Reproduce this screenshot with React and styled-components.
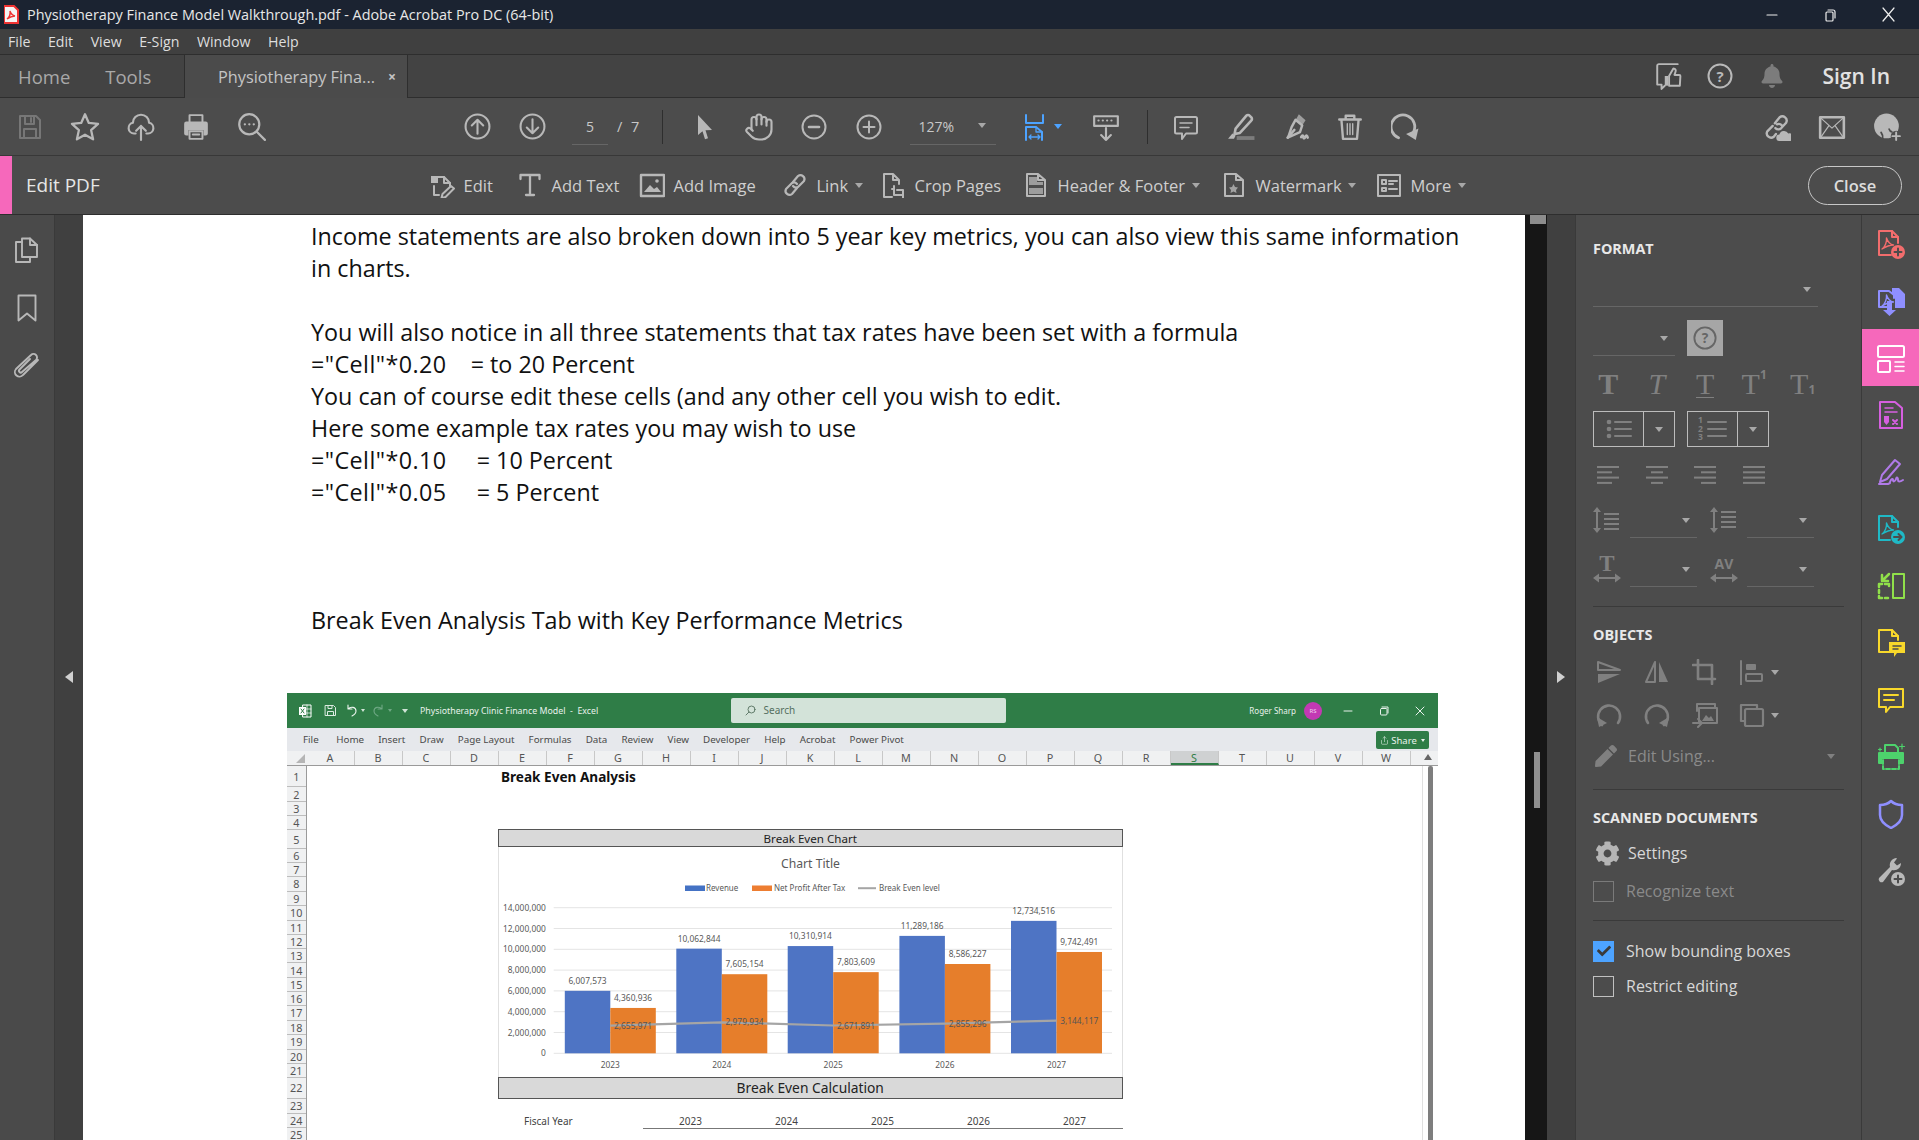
import React from 'react';
import styled, { createGlobalStyle } from 'styled-components';
import { Hand, Share } from 'lucide-react';
import { FaCog, FaPen, FaBell, FaCheck } from 'react-icons/fa';

const Global = createGlobalStyle`
  html, body { margin: 0; padding: 0; background: #4b4b4b; }
  #root { width: 1919px; height: 1140px; overflow: hidden; }
  * { box-sizing: border-box; }
`;
const UI = `"Open Sans", "Noto Sans", sans-serif`;

const Shell = styled.div`
  width: 1919px; height: 1140px; display: flex; flex-direction: column;
  font-family: ${UI}; color: #d8d8d8; overflow: hidden;
`;
const Glyph = styled.svg`
  display: block; flex: none; width: ${p => p.$s}px; height: ${p => p.$h || p.$s}px;
  color: ${p => p.$c || '#b8b8b8'}; fill: none; stroke: currentColor;
  stroke-width: ${p => p.$sw}; stroke-linecap: round; stroke-linejoin: round;
`;
const Ic = ({ s = 26, c, sw = 2, vb = 26, children }) => (
  <Glyph $s={s} $c={c} $sw={sw} viewBox={`0 0 ${vb} ${vb}`}>{children}</Glyph>
);
const F = p => <path fill="currentColor" stroke="none" {...p} />;

/* title bar */
const TitleBar = styled.div`
  height: 29px; background: #1b2331; display: flex; align-items: center; color: #e8e8e8;
  font-size: 14.4px; padding-left: 4px;
`;
const TitleText = styled.span`margin-left: 8px; white-space: nowrap;`;
const WinControls = styled.div`margin-left: auto; display: flex; padding-right: 2px;`;
const WinBtn = styled.div`width: 58px; display: flex; justify-content: center; align-items: center;`;

/* menu */
const MenuBar = styled.div`
  height: 26px; background: #404040; display: flex; align-items: center; gap: 17.5px;
  padding-left: 8px; font-size: 14.2px; color: #dedede; border-bottom: 1px solid #2e2e2e;
`;

/* tabs */
const TabBar = styled.div`
  height: 43px; background: #434343; display: flex; align-items: stretch;
  border-bottom: 1px solid #2e2e2e;
`;
const NavTabs = styled.div`width: 184px; display: flex; align-items: center; gap: 35px; padding-left: 18px;`;
const NavTab = styled.span`font-size: 18.5px; color: #a9a9a9;`;
const DocTab = styled.div`
  width: 224px; background: #4b4b4b; border-left: 1px solid #2e2e2e; border-right: 1px solid #2e2e2e;
  margin-bottom: -1px; display: flex; align-items: center; padding-left: 33px;
  font-size: 16.3px; color: #c4c4c4; white-space: nowrap;
`;
const TabClose = styled.span`margin-left: auto; margin-right: 11px; font-size: 14px; font-weight: 700; color: #c4c4c4;`;
const TabRight = styled.div`margin-left: auto; display: flex; align-items: center; padding-right: 29px;`;
const TabSlot = styled.div`width: 52px; display: flex; justify-content: center;`;
const SignIn = styled.span`margin-left: 24px; font-size: 21px; font-weight: 600; color: #e2e2e2;`;

/* toolbar */
const Toolbar = styled.div`
  height: 58px; background: #4c4c4c; display: flex; align-items: center;
  border-bottom: 1px solid #383838; padding-right: 4.5px; flex: none;
`;
const Slot = styled.div`
  width: ${p => p.$w || 55}px; margin-left: ${p => p.$ml || 0}px; flex: none;
  display: flex; justify-content: center; align-items: center;
`;
const Field = styled.div`
  width: ${p => p.$w}px; margin-left: ${p => p.$ml || 0}px; height: 36px; flex: none;
  padding-left: ${p => p.$pl || 0}px; border-bottom: 1px solid #666; display: flex; align-items: center;
  font-size: 14px; color: #c8c8c8; justify-content: ${p => p.$j || 'center'}; position: relative;
`;
const PlainLabel = styled.span`
  margin-left: ${p => p.$ml}px; width: ${p => p.$w}px; flex: none; font-size: 14.5px; color: #c8c8c8; word-spacing: 5px; white-space: nowrap;
`;
const ToolSep = styled.div`width: 1px; height: 34px; background: #2e2e2e; flex: none; margin-left: ${p => p.$ml}px;`;
const Caret = styled.span`
  display: inline-block; flex: none; width: 0; height: 0; border-left: ${p => p.$r || 4}px solid transparent;
  border-right: ${p => p.$r || 4}px solid transparent; border-top: ${p => (p.$r || 4) + 1}px solid ${p => p.$c || '#a8a8a8'};
  margin-left: ${p => p.$ml || 0}px;
`;
const FieldCaret = styled(Caret)`position: absolute; right: 10px; top: 14px;`;
const ToolRight = styled.div`margin-left: auto; display: flex;`;

/* edit bar */
const EditBar = styled.div`
  height: 59px; background: #4c4c4c; display: flex; align-items: center; flex: none;
  border-bottom: 1px solid #2e2e2e;
`;
const Strip = styled.div`width: 12px; height: 100%; background: #f668bb; flex: none;`;
const EditTitle = styled.div`width: 417px; flex: none; padding-left: 14px; font-size: 19px; color: #e6e6e6; font-weight: 500;`;
const EditItem = styled.div`
  width: ${p => p.$w}px; flex: none; display: flex; align-items: center; gap: 8.5px;
  font-size: 16.5px; color: #cfcfcf; white-space: nowrap;
`;
const CloseBtn = styled.div`
  margin-left: auto; margin-right: 17px; width: 94px; height: 39px; border: 1.5px solid #c8c8c8;
  border-radius: 20px; display: flex; align-items: center; justify-content: center;
  font-size: 16.5px; font-weight: 600; color: #dcdcdc;
`;

/* main */
const Main = styled.div`flex: 1; display: flex; min-height: 0;`;
const LeftRail = styled.div`
  width: 55px; background: #4a4a4a; border-right: 1px solid #3a3a3a; flex: none;
  display: flex; flex-direction: column; align-items: center; padding-top: 21px; gap: 30px;
`;
const Gutter = styled.div`
  width: 28px; background: #404040; flex: none; display: flex; align-items: center; justify-content: center;
  padding-bottom: 1px;
`;
const Tri = styled.span`
  width: 0; height: 0; border-top: 6px solid transparent; border-bottom: 6px solid transparent;
  ${p => p.$dir === 'l' ? 'border-right: 8px solid #d0d0d0;' : 'border-left: 8px solid #d0d0d0;'}
`;
const Viewport = styled.div`width: 1442px; flex: none; background: #fff; overflow: hidden;`;
const PageText = styled.div`
  padding: 5px 0 0 228px; font-family: "Open Sans", sans-serif; font-size: 23.32px; line-height: 32px; color: #111;
`;
const Line = styled.div`white-space: pre; min-height: 32px;`;
const Formula = styled.span`letter-spacing: 0.42px;`;
const ScrollTrack = styled.div`width: 22px; flex: none; background: #161616; position: relative;`;
const ThumbTop = styled.div`position: absolute; left: 5px; right: 1px; top: 0; height: 9px; background: #8c8c8c;`;
const ThumbMid = styled.div`position: absolute; left: 9px; width: 6px; top: 537px; height: 56px; background: #8f8f8f;`;

/* Excel picture */
const Excel = styled.div`
  margin: 57px 0 0 204px; width: 1151px; font-family: "Noto Sans", sans-serif; color: #444;
`;
const XTitle = styled.div`
  height: 35px; background: #2f7d47; display: flex; align-items: center; color: #e9f2ec; font-size: 8.8px; position: relative;
`;
const XIcon = styled.div`width: ${p => p.$w}px; margin-left: ${p => p.$ml || 0}px; flex: none; display: flex; justify-content: center; align-items: center;`;
const XDoc = styled.span`margin-left: ${p => p.$ml}px; white-space: pre; flex: none; font-size: ${p => p.$fs || 8.8}px;`;
const XSearch = styled.div`
  position: absolute; left: 443.5px; top: 5px; width: 275.5px; height: 24.5px; background: #d3e3d9; border-radius: 2px;
  display: flex; align-items: center; gap: 8px; padding-left: 14px; color: #55705f; font-size: 10px;
`;
const XAvatar = styled.div`
  width: 18px; height: 18px; border-radius: 50%; background: #c239b3; margin-left: 8px; flex: none;
  font-size: 6px; color: #f0d0ee; display: flex; align-items: center; justify-content: center;
`;
const XRight = styled.div`margin-left: auto; display: flex; align-items: center;`;
const XRibbon = styled.div`
  height: 23px; background: #e6e8ec; display: flex; align-items: center; font-size: 9.8px; color: #4a4a4a;
  padding-left: 16px; gap: 14.1px; position: relative; white-space: nowrap;
`;
const XTab = styled.span`margin-right: ${p => p.$mr || 0}px;`;
const XShare = styled.div`
  position: absolute; right: 9px; top: 3px; width: 53px; height: 18px; background: #2f7d47; border-radius: 2px; color: #e9f2ec;
  display: flex; align-items: center; justify-content: center; gap: 2px; font-size: 9.5px;
`;
const XCols = styled.div`display: flex; height: 15px; background: #f0f1f2; border-bottom: 1px solid #9a9a9a;`;
const XCorner = styled.div`width: 19.5px; flex: none; display: flex; align-items: flex-end; justify-content: flex-end; padding: 0 2px 2px 0;`;
const XCol = styled.div`
  width: 48px; flex: none; text-align: center; font-size: 10.8px; line-height: 14px; color: #555;
  border-right: 1px solid #c8c8c8; ${p => p.$on && 'background: #cfd1d2; border-bottom: 2px solid #2f7d47; color: #2f7d47;'}
`;
const XColEnd = styled.div`flex: 1; display: flex; justify-content: flex-end; padding: 3px 6px 0 0;`;
const XBody = styled.div`display: flex; background: #fff;`;
const XRows = styled.div`width: 19.5px; flex: none; border-right: 1px solid #9a9a9a; background: #f0f1f2;`;
const XRow = styled.div`
  height: ${p => p.$h}px; display: flex; align-items: center; justify-content: center; font-size: 10.8px;
  color: #555; border-bottom: 1px solid #bdbdbd;
`;
const XSheet = styled.div`width: 1115.5px; flex: none; padding-left: 191.5px;`;
const XHeading = styled.div`height: 63px; padding-left: 3px; font-size: 13.6px; font-weight: 700; color: #111; line-height: 21px;`;
const XBanner = styled.div`
  width: 624.5px; height: ${p => p.$h}px; background: #d9d9d9; border: 1px solid #555; color: #222; text-align: center;
  font-size: ${p => p.$fs}px; line-height: ${p => p.$h - 1}px;
`;
const XChartFrame = styled.div`width: 624.5px; height: 230px; border-left: 1px solid #e0e0e0; border-right: 1px solid #e0e0e0;`;
const XFiscal = styled.div`
  width: 624.5px; margin-top: 16px; display: grid; grid-template-columns: 144.5px repeat(5, 96px);
  font-size: 10px; color: #444; line-height: 12px;
`;
const XFiscalLabel = styled.div`padding-left: 26px;`;
const XYear = styled.div`text-align: center; border-bottom: 1px solid #777; padding-bottom: 1px;`;
const XVScroll = styled.div`flex: 1; border-left: 1px solid #e0e0e0; display: flex; justify-content: flex-end; padding-right: 5px;`;
const XVBar = styled.div`width: 5px; height: 500px; background: #7e7e7e; border-radius: 2px;`;

/* side panel */
const Panel = styled.div`
  width: 287px; flex: none; background: #4c4c4c; padding: 24px 0 0 17px; border-left: 1px solid #3a3a3a; border-right: 1px solid #3a3a3a;
`;
const Heading = styled.div`
  height: 20px; line-height: 20px; margin-top: ${p => p.$mt || 0}px; font-size: 14.4px; font-weight: 700; color: #e8e8e8;
`;
const Row = styled.div`
  display: flex; align-items: center; height: ${p => p.$h}px; margin-top: ${p => p.$mt || 0}px; margin-left: ${p => p.$ml || 0}px;
`;
const Select = styled.div`
  width: ${p => p.$w}px; height: ${p => p.$h || 28}px; flex: none; margin-top: ${p => p.$mt || 0}px; border-bottom: 1px solid #666; position: relative;
`;
const SelectCaret = styled(Caret)`position: absolute; right: 7px; top: ${p => p.$t || 14}px;`;
const HelpBox = styled.div`
  width: 36px; height: 36px; margin-left: 12px; background: #a6a6a6; display: flex; align-items: center; justify-content: center;
`;
const Cell = styled.div`
  width: ${p => p.$w}px; flex: none; display: flex; justify-content: center; align-items: center; padding-right: ${p => p.$pr || 0}px;
`;
const SerifT = styled.span`
  font-family: "Liberation Serif", serif; font-size: 30px; font-weight: ${p => p.$b ? 700 : 400}; font-style: ${p => p.$i ? 'italic' : 'normal'};
  color: #808080; line-height: 30px; position: relative;
  ${p => p.$u && 'border-bottom: 1.5px solid #808080; line-height: 27px;'}
`;
const SupSub = styled.span`
  position: absolute; left: 100%; top: ${p => p.$sub ? 15 : 0}px; font-family: ${UI}; font-size: 12px; font-weight: 700; line-height: 12px; color: #808080;
`;
const ListBox = styled.div`
  width: 82px; height: 36px; margin-right: 12px; flex: none; border: 1px solid #bcbcbc; display: flex; align-items: center;
`;
const ListMain = styled.div`width: 50px; height: 100%; border-right: 1px solid #bcbcbc; display: flex; align-items: center; justify-content: center; gap: 4px;`;
const ListSide = styled.div`flex: 1; display: flex; justify-content: center;`;
const Nums = styled.div`font-size: 8.5px; line-height: 8.5px; font-weight: 700; color: #808080; text-align: center;`;
const SpaceCell = styled.div`width: 37px; margin-left: ${p => p.$ml || 0}px; flex: none; display: flex; justify-content: flex-start;`;
const Stack = styled.div`display: flex; flex-direction: column; align-items: center; color: #808080;`;
const TT = styled.span`font-family: "Liberation Serif", serif; font-weight: 700; font-size: 23px; line-height: 17px; color: #808080;`;
const AV = styled.span`font-family: ${UI}; font-weight: 700; font-size: 14px; line-height: 17px; color: #808080;`;
const Sep = styled.div`width: 251px; height: 1px; background: #3a3a3a; margin-top: ${p => p.$mt}px;`;
const ObjCell = styled.div`
  width: 48px; flex: none; display: flex; align-items: center; gap: 6px;
  ${p => p.$menu ? 'padding-left: 10px;' : 'justify-content: center;'}
`;
const Muted = styled.span`font-size: 16px; color: ${p => p.$c || '#8a8a8a'}; margin-left: ${p => p.$ml || 0}px; white-space: nowrap;`;
const Check = styled.div`
  width: 21px; height: 21px; flex: none; border: 1.5px solid ${p => p.$dim ? '#7a7a7a' : '#c0c0c0'};
  ${p => p.$on && 'background: #4da3ff; border: 0; color: #3a3a3a;'} display: flex; align-items: center; justify-content: center;
`;
const GrowCaret = styled(Caret)`margin-left: auto; margin-right: 26px;`;
const Rail = styled.div`flex: 1; background: #4c4c4c; display: flex; flex-direction: column;`;
const RailSlot = styled.div`
  height: 57px; display: flex; align-items: center; justify-content: center; ${p => p.$on && 'background: #f668bb;'}
`;

/* icons */
const G = '#b9b9b9', D = '#808080', BLUE = '#4da3ff', DK = '#4c4c4c';
const Swoosh = () => <path d="M6 20c3-2 5-7 4.5-11 1.5 4.5 3.5 6.5 7 7-3.5 0-7.500 1.500-11.500 4z" strokeWidth="1.4" />;

const AcrobatFile = () => (
  <svg width="15" height="19" viewBox="0 0 15 19"><path d="M0 1h10l4 4v13H0z" fill="#f4f4f4" stroke="#e33" strokeWidth="2" /><path d="M3 14c2-1.500 3.500-5 3-8 1 3 2.500 4.500 5 5-2.500 0-5 1-8 3z" fill="none" stroke="#e33" strokeWidth="1.4" /></svg>
);
const WinMin = () => <Ic s={14} vb={14} c="#eee" sw={1.2}><path d="M2 7h10" /></Ic>;
const WinRestore = () => <Ic s={14} vb={14} c="#eee" sw={1.2}><rect x="3" y="4" width="7" height="9" rx="1" /><path d="M5 2h5a2 2 0 0 1 2 2v6" /></Ic>;
const WinClose = () => <Ic s={15} vb={15} c="#eee" sw={1.2}><path d="M2 1l11 13M13 1L2 14" /></Ic>;

const Star = () => <Ic s={30}><path d="M13 2l3.300 7.500 8 .8-6 5.400 1.700 8L13 19.700 6 23.700l1.700-8-6-5.400 8-.8z" /></Ic>;
const Save = () => <Ic c="#777"><path d="M3 2h16l4 4v18H3z" /><path d="M8 2v8h9V2M14 4v4M7 24v-9h12v9" /></Ic>;
const Upload = () => <Ic s={28}><path d="M8 19H6.500a5 5 0 0 1-1-9.900 7.500 7.500 0 0 1 15 0 5 5 0 0 1-1 9.900H18" /><path d="M13 25V12M8.500 16.500 13 12l4.500 4.500" /></Ic>;
const Print = () => <Ic s={28} sw={1.8}><path d="M7 9V2h12v7" /><F d="M4 8h18a2 2 0 0 1 2 2v9a2 2 0 0 1-2 2h-2v-5H6v5H4a2 2 0 0 1-2-2v-9a2 2 0 0 1 2-2z" /><path d="M7 17h12v7H7zM10 20h6" /></Ic>;
const Find = () => <Ic s={29}><circle cx="11" cy="11" r="9" /><path d="M17.500 17.500 25 25M7 11h.1M11 11h.1M15 11h.1" /></Ic>;
const CircleUp = () => <Ic s={27}><circle cx="13" cy="13" r="11.500" /><path d="M13 20V6.500M7.500 12 13 6.500l5.500 5.500" /></Ic>;
const CircleDown = () => <Ic s={27}><circle cx="13" cy="13" r="11.500" /><path d="M13 6v13.500M7.500 14l5.500 5.500L18.500 14" /></Ic>;
const Cursor = () => <Ic><F d="M7 1l14 15-6.500.3 2.500 8-3 1-2.500-8L7 21z" /></Ic>;
const Minus = () => <Ic><circle cx="13" cy="13" r="11.500" /><path d="M8 13h10" strokeWidth="2.600" /></Ic>;
const Plus = () => <Ic><circle cx="13" cy="13" r="11.500" /><path d="M7.500 13h11M13 7.500v11" /></Ic>;
const Fit = () => <Ic s={28} vb={28} c={BLUE} sw={2}><path d="M5 2v8h17V2" /><path d="M5 27V14h10l6 5v8" /><path d="M15 14v5h6M8 24h11M8 24l2-2M8 24l2 2M19 24l-2-2M19 24l-2 2" strokeWidth="1.300" /></Ic>;
const ReadMode = () => <Ic s={28}><path d="M2 3h22v9H2z" strokeWidth="2" /><path d="M6 7h.1M10 7h.1M14 7h.1M18 7h.1M13 14v11M8.500 20.500 13 25l4.500-4.500" /></Ic>;
const Note = () => <Ic><path d="M3.500 3h19a1.500 1.500 0 0 1 1.500 1.500V18a1.500 1.500 0 0 1-1.500 1.500H13L9 25v-5.500H3.500A1.500 1.500 0 0 1 2 18V4.500A1.500 1.500 0 0 1 3.500 3z" /><path d="M7 9h12M7 13.500h9" strokeWidth="1.500" /></Ic>;
const Marker = () => <Ic s={28} sw={2.400}><path d="M18 2.500a2 2 0 0 1 3 0l1.500 1.500a2 2 0 0 1 0 3L12 18.500 7 19.500l1-5z" /><F d="M1 24l4-5 3 2-1.500 3z" /><F d="M9 21.500h16.500V25H9z" opacity=".45" /></Ic>;
const Nib = () => <Ic s={29} sw={2.200}><path d="M13 7l6 5-2 6-11 5 .5-.5 3-9z" /><F d="M13.500 6.500 16 2l6 5.500-3 4.500z" opacity=".75" /><path d="M6 23l6-7M18 22.500c1-2 2-2 2 0s1.500 1 2-.5 1.500-1 2 1" /></Ic>;
const Bin = () => <Ic s={28} sw={2.200}><path d="M3 6h20M9 6V2.500h8V6M5 6l1.500 18h13L21 6" /><path d="M10.500 10v10M13 10v10M15.500 10v10" strokeWidth="1.300" /></Ic>;
const Rotate = () => <Ic s={28} sw={2.600}><path d="M7 23A11 11 0 1 1 21 17.500" /><F d="M25.500 14.500 23 25l-9-5.500z" /></Ic>;
const LinkCloud = () => <Ic s={28} sw={2.200}><path d="M11 9.500l4.500-5.500a4 4 0 0 1 6 5L17 14a4 4 0 0 1-5.500 0M13 10.500a4 4 0 0 1 4.500 1M9 12l-5 5a4 4 0 0 0 6 5l2-2.500" /><F d="M15.500 26a3 3 0 0 1-.3-6 4.500 4.500 0 0 1 8.300-1 3.500 3.500 0 0 1 1.500 7z" /></Ic>;
const Mail = () => <Ic s={28} sw={2}><path d="M2 4h22v19H2z" strokeWidth="2.400" /><path d="M3 5l10 9 10-9M3 22l7-10M23 22l-7-10" strokeWidth="1.100" /></Ic>;
const UserAdd = () => <Ic s={28}><circle cx="12.500" cy="12" r="11.500" fill="currentColor" stroke="none" /><path d="M9 24c.3-2 0-4-1.500-6M15 15c.5 1.500 1 2 2.500 2.500" stroke={DK} strokeWidth="1.600" /><circle cx="21.500" cy="21.500" r="5" fill={DK} stroke="none" /><path d="M21.500 18v7M18 21.500h7" strokeWidth="1.800" /></Ic>;
const Thumb = () => <Ic s={28} sw={1.800}><path d="M7 21H3V3.500A1.500 1.500 0 0 1 4.500 2H22M7 21v4l3-3" /><F d="M10 13h3v9h-3z" /><path d="M14 13l4-7c2 0 2.500 1.500 2 3l-1 3h4.500a1 1 0 0 1 1 1L24 22H14z" /></Ic>;
const Help = ({ c = G, s = 26 }) => <Ic s={s} c={c}><circle cx="13" cy="13" r="11.500" /><text x="13" y="18.500" textAnchor="middle" fontSize="15" fontWeight="700" fill="currentColor" stroke="none" fontFamily="Open Sans">?</text></Ic>;

const EdPage = () => <Ic><path d="M8 5h7l6 6v3" /><F d="M2 4h7v7H2z" /><path d="M15 5v6h6M5 14v9h5" /><path d="M22 14l3 2.500-8.500 8.500-4 1 1-4z" /></Ic>;
const TextT = () => <Ic sw={2.300}><path d="M3.500 7V3h19v4M13 3v20M9 23h8" /></Ic>;
const AddImg = () => <Ic sw={2.400}><rect x="2" y="3" width="23" height="21" /><F d="M5 20l6-7 4 4 3-2 4 5z" /><circle cx="18" cy="9" r="1.800" fill="currentColor" stroke="none" /></Ic>;
const LinkI = () => <Ic sw={2.200}><path d="M11 10l5-6a4 4 0 0 1 6 5l-6 6a4 4 0 0 1-5-1" /><path d="M15 16l-5 6a4 4 0 0 1-6-5l6-6a4 4 0 0 1 5 1" /></Ic>;
const Crop = () => <Ic><path d="M12 25H4V2h9l6 6v4M13 2v6h6" /><path d="M14 14v9h9M17 18h6v8M14 17h-2" /></Ic>;
const HdrFtr = () => <Ic><path d="M4 2h11l7 6v16H4zM15 2v6h7" /><F d="M6 5h8v5h6v3H6z" opacity=".75" /><F d="M6 16h14v6H6z" opacity=".75" /></Ic>;
const Wmark = () => <Ic><path d="M4 2h11l7 6v16H4zM15 2v6h7" /><F d="M12.500 12l1.500 3 3 .5-2 2.500.5 3-3-1.500-3 1.500.5-3-2-2.500 3-.5z" opacity=".8" /></Ic>;
const More = () => <Ic><rect x="2" y="3" width="22" height="21" /><path d="M6 8h4v4H6zM6 16h4v3H6zM13 9h8M13 12h4M13 17h8" /></Ic>;

const Pages = () => <Ic s={28} vb={28} sw={1.900}><path d="M9 6V2.500h8l7 6.500v12h-7" /><path d="M17 2.500V9h7M9 6H3v20h14v-5" /><path d="M9 6v15h8" /></Ic>;
const Bookmark = () => <Ic s={28} vb={28} sw={1.900}><path d="M5.500 1.500h17v25l-8.500-7-8.500 7z" /></Ic>;
const Clip = () => <Ic s={28} vb={28} sw={1.900}><path d="M25 8 10 23a4.500 4.500 0 0 1-7-6L18 3a3.500 3.500 0 0 1 5 5L9 20a1.700 1.700 0 0 1-2.500-2.500L17 7" /></Ic>;

const RIC = (c, ch) => <Ic s={30} vb={30} c={c} sw={2}>{ch}</Ic>;
const railIcons = [
  RIC('#f26d6d', <><path d="M15 26H3V2h13l6 6v6" /><path d="M16 2v6h6" /><Swoosh /><circle cx="22" cy="23" r="7" fill="currentColor" stroke="none" /><path d="M22 19.500v7M18.500 23h7" stroke={DK} /></>),
  RIC('#8f8fff', <><path d="M14 21H3V5h10l5 4v3" /><Swoosh /><F d="M16 2h7l6 6v14H19V10l-3-3z" /><F d="M11 15h5v9h4l-6.500 6L7 24h4z" /></>),
  RIC('#ffffff', <><rect x="2" y="3" width="26" height="11" rx="1.500" /><rect x="2" y="18" width="12" height="11" rx="1" /><path d="M19 19h9M19 23.500h9M19 28h9" strokeWidth="1.500" /></>),
  RIC('#d65fe0', <><path d="M4 2h15l7 6v20H4z" /><path d="M9 8h8M9 12h12" strokeWidth="1.500" /><F d="M8 16h5v6l-2.500 3L8 22z" /><path d="M17 20l4 4M21 20l-4 4" /></>),
  RIC('#b07ae8', <><path d="M4 25l2-7L19 3l5 4L11 22z" /><path d="M3 27h9l2-1M14 25c1-3 3-4 3-2s2 2 3-1 2-1 2 1 2 2 5 0" /></>),
  RIC('#1fb9c6', <><path d="M14 26H3V2h13l6 6v5" /><path d="M16 2v6h6" /><Swoosh /><circle cx="22" cy="23" r="7" fill="currentColor" stroke="none" /><path d="M18 23h7M22.500 20l3 3-3 3" stroke={DK} /></>),
  RIC('#90e04a', <><rect x="17" y="3" width="11" height="24" /><path d="M3 13h10M3 13v14M3 27h10M13 13v2" strokeDasharray="3 3" strokeWidth="2.500" /><path d="M13 3 7 9M6 4v6h6" strokeWidth="2.500" /></>),
  RIC('#f8d82b', <><path d="M14 24H3V2h13l6 6v4" /><path d="M16 2v6h6" /><F d="M13 14h16v11h-8l-3 4v-4h-5z" /><path d="M17 18h8M17 21h5" stroke={DK} strokeWidth="1.500" /></>),
  RIC('#f8d82b', <><path d="M3 4h24v18H14l-4 5v-5H3z" /><path d="M8 10h14M8 15h10" /></>),
  RIC('#4dd26c', <><path d="M9 11V3h10l3 3v5" /><F d="M3 10h24a1 1 0 0 1 1 1v10a1 1 0 0 1-1 1h-3v-5H6v5H3a1 1 0 0 1-1-1V11a1 1 0 0 1 1-1z" /><path d="M7 18v9h16v-9" strokeDasharray="4 2" /><path d="M26 2v5M23.500 4.500h5M4 6v3M2.500 7.500h3" strokeWidth="1.200" /></>),
  RIC('#8f8fff', <><path d="M15 2c3 3 7 4 11 4v10c0 6-5 10-11 13C9 26 4 22 4 16V6c4 0 8-1 11-4z" strokeWidth="2.500" /></>),
  RIC('#b9b9b9', <><path d="M3 22 14 11c-1-4 1-8 6-9l1 .5-3 4 3 3 4-2.500c0 5-4 8-9 7L7 26a3 3 0 0 1-4-4z" fill="currentColor" stroke="none" /><circle cx="22" cy="23" r="7" fill="currentColor" stroke="none" /><path d="M22 19.500v7M18.500 23h7" stroke={DK} /></>),
];

const AlignI = ({ kind }) => {
  const rows = {
    l: [[1, 23], [1, 16], [1, 23], [1, 16]],
    c: [[1, 23], [6, 18], [1, 23], [6, 18]],
    r: [[1, 23], [8, 23], [1, 23], [8, 23]],
    j: [[1, 23], [1, 23], [1, 23], [1, 23]],
  }[kind];
  return <Ic s={24} vb={24} c={D} sw={2}>{rows.map((r, i) => <path key={i} d={`M${r[0]} ${4 + i * 5.300}H${r[1]}`} strokeLinecap="butt" />)}</Ic>;
};
const LineSpacing = ({ many }) => (
  <Ic s={28} vb={28} c={D} sw={2}>
    <path d="M4 5v18" /><F d="M4 1l4 5H0zM4 27l4-5H0z" />
    {(many ? [6, 11, 16, 21] : [8, 13, 18, 23]).map(y => <path key={y} d={`M11 ${y}H26`} strokeLinecap="butt" />)}
  </Ic>
);
const HArrow = () => (
  <Glyph $s={28} $h={12} $c={D} $sw={2} viewBox="0 8 28 12"><path d="M4 14h20" /><F d="M0 14l6-4.500v9zM28 14l-6-4.500v9z" /></Glyph>
);
const Obj = {
  flipH: <Ic c={D} sw={2}><path d="M2 3l22 8H2z" /><F d="M2 15h22L2 24z" /></Ic>,
  flipV: <Ic c={D} sw={2}><path d="M11 3v20H2z" /><F d="M15 3l9 20h-9z" /></Ic>,
  crop: <Ic c={D} sw={2.600}><path d="M6 1v19h17M1 6h19v19" /></Ic>,
  align: <Ic c={D} sw={2}><path d="M2 2v24" /><rect x="7" y="5" width="10" height="6" rx="1" fill="currentColor" stroke="none" /><rect x="7" y="15" width="16" height="7" rx="1" /></Ic>,
  undo: <Ic c={D} sw={2.600}><path d="M6 23A11 11 0 1 1 22 21" /><F d="M1 15l2 10 8-4z" /></Ic>,
  redo: <Ic c={D} sw={2.600}><path d="M20 23A11 11 0 1 0 4 21" /><F d="M25 15l-2 10-8-4z" /></Ic>,
  replace: <Ic c={D} sw={2}><path d="M5 9V2h18v4" /><rect x="7" y="6" width="18" height="15" /><F d="M10 19l4-6 3 3 2-2 3 5z" /><path d="M1 21h9M6 17l4 4-4 4" /></Ic>,
  copy: <Ic c={D} sw={2.200}><path d="M5 19H2V3h16v3" /><rect x="6" y="7" width="18" height="17" rx="1.500" /></Ic>,
};
const ListBullets = () => <Ic s={28} vb={28} c={D} sw={2}>{[7, 14, 21].map(y => <React.Fragment key={y}><circle cx="4" cy={y} r="2.300" fill="currentColor" stroke="none" /><path d={`M10 ${y}H26`} /></React.Fragment>)}</Ic>;
const ListLines = () => <Ic s={20} vb={20} c={D} sw={2}><path d="M1 3h18M1 10h18M1 17h18" /></Ic>;

/* Excel chart */
const years = [
  { y: 2023, x: 65.8, r: 6.007573, n: 4.360936, rl: '6,007,573', nl: '4,360,936', bl: '2,655,971', b: 2.656 },
  { y: 2024, x: 177.3, r: 10.062844, n: 7.605154, rl: '10,062,844', nl: '7,605,154', bl: '2,979,934', b: 2.98 },
  { y: 2025, x: 288.7, r: 10.310914, n: 7.803609, rl: '10,310,914', nl: '7,803,609', bl: '2,671,891', b: 2.672 },
  { y: 2026, x: 400.4, r: 11.289186, n: 8.586227, rl: '11,289,186', nl: '8,586,227', bl: '2,855,296', b: 2.855 },
  { y: 2027, x: 512, r: 12.734516, n: 9.742491, rl: '12,734,516', nl: '9,742,491', bl: '3,144,117', b: 3.144 },
];
const base = 206.3, perM = 10.4, barW = 45.5;
const yOf = v => base - v * perM;
const ChartTxt = styled.text`font-family: "Noto Sans", sans-serif; font-size: ${p => p.$fs}px; fill: ${p => p.$c || '#595959'};`;
const Chart = () => (
  <svg width="623" height="230" viewBox="0 0 623 230">
    <ChartTxt x="311.500" y="21" $fs={12.200} textAnchor="middle">Chart Title</ChartTxt>
    <rect x="186" y="38.500" width="20" height="5.500" fill="#4472c4" />
    <ChartTxt x="207" y="44" $fs={8}>Revenue</ChartTxt>
    <rect x="253" y="38.500" width="20" height="5.500" fill="#ed7d31" />
    <ChartTxt x="275" y="44" $fs={8}>Net Profit After Tax</ChartTxt>
    <path d="M359 41.200h18" stroke="#a5a5a5" strokeWidth="2" />
    <ChartTxt x="380" y="44" $fs={8}>Break Even level</ChartTxt>
    {[14, 12, 10, 8, 6, 4, 2, 0].map(m => (
      <React.Fragment key={m}>
        <path d={`M54.700 ${yOf(m)}H613`} stroke="#e4e4e4" strokeWidth="1" />
        <ChartTxt x="46.800" y={yOf(m) + 3} $fs={8.400} textAnchor="end">{m === 0 ? '0' : `${m},000,000`}</ChartTxt>
      </React.Fragment>
    ))}
    {years.map(d => (
      <React.Fragment key={d.y}>
        <rect x={d.x} y={yOf(d.r)} width={barW} height={d.r * perM} fill="#4e74c4" />
        <rect x={d.x + barW} y={yOf(d.n)} width={barW} height={d.n * perM} fill="#e67e2b" />
        <ChartTxt x={d.x + barW / 2} y={yOf(d.r) - 7} $fs={8.400} textAnchor="middle">{d.rl}</ChartTxt>
        <ChartTxt x={d.x + barW * 1.5} y={yOf(d.n) - 7} $fs={8.400} textAnchor="middle">{d.nl}</ChartTxt>
        <ChartTxt x={d.x + barW} y="221" $fs={8.400} textAnchor="middle">{d.y}</ChartTxt>
      </React.Fragment>
    ))}
    <polyline fill="none" stroke="#a5a5a5" strokeWidth="2.200" points={years.map(d => `${d.x + barW},${yOf(d.b)}`).join(' ')} />
    {years.map(d => (
      <ChartTxt key={d.y} x={d.x + barW * 1.5} y={yOf(d.b) + 3} $fs={8.400} $c="#555" textAnchor="middle">{d.bl}</ChartTxt>
    ))}
  </svg>
);

const rowH = [21.3, 14.7, 14.3, 14, 18.7, 14, 14.3, 14.3, 14.3, 14.7, 14.3, 14.3, 14.3, 14.3, 14.3, 14.3, 14.3, 14.7, 14.3, 14, 14, 21, 15, 14.3, 14];
const colNames = 'ABCDEFGHIJKLMNOPQRSTUVW'.split('');
const ribbon = ['File', 'Home', 'Insert', 'Draw', 'Page Layout', 'Formulas', 'Data', 'Review', 'View', 'Developer', 'Help', 'Acrobat', 'Power Pivot'];

const ExcelPic = () => (
  <Excel>
    <XTitle>
      <XIcon $w={16} $ml={10}><Ic s={14} vb={14} c="#fff" sw={1}><rect x="5" y="1" width="8" height="12" /><path d="M9 1v12M5 5h8M5 9h8" strokeWidth=".7" /><F d="M1 3h7v8H1z" /><path d="M3 5l3 4M6 5 3 9" stroke="#2f7d47" /></Ic></XIcon>
      <XIcon $w={14} $ml={10}><Ic s={13} vb={13} c="#dcebe1" sw={1}><path d="M1.500 1.500h8l2 2v8h-10zM4 1.500v3h4v-3M3.500 11.500v-4h6v4" /></Ic></XIcon>
      <XIcon $w={14} $ml={7}><Ic s={13} vb={13} c="#eef6f0" sw={1.100}><path d="M3 1v4h4M3 5c3-3 8-2 8 2 0 3-2 4-4 5" /></Ic></XIcon>
      <XIcon $w={8} $ml={1}><Caret $r={2} $c="#d0e4d7" /></XIcon>
      <XIcon $w={14} $ml={4}><Ic s={13} vb={13} c="#6fa884" sw={1.100}><path d="M10 1v4H6M10 5C7 2 2 3 2 7c0 3 2 4 4 5" /></Ic></XIcon>
      <XIcon $w={8} $ml={1}><Caret $r={2} $c="#6fa884" /></XIcon>
      <XIcon $w={8} $ml={7}><Caret $r={3} $c="#d0e4d7" /></XIcon>
      <XDoc $ml={11}>Physiotherapy Clinic Finance Model  -  Excel</XDoc>
      <XSearch>
        <Ic s={11} vb={11} c="#55705f" sw={.9}><circle cx="6.500" cy="4.500" r="3.500" /><path d="M4 7 1 10" /></Ic>
        Search
      </XSearch>
      <XRight>
        <XDoc $ml={0} $fs={8}>Roger Sharp</XDoc>
        <XAvatar>RS</XAvatar>
        <XIcon $w={36} $ml={8}><Ic s={10} vb={10} c="#e9f2ec" sw={1}><path d="M1 5h8" /></Ic></XIcon>
        <XIcon $w={36}><Ic s={10} vb={10} c="#e9f2ec" sw={1}><rect x="1.500" y="2.500" width="6.500" height="6.500" rx="1" /><path d="M3 1h6v6" /></Ic></XIcon>
        <XIcon $w={36}><Ic s={10} vb={10} c="#e9f2ec" sw={1}><path d="M1 1l8 8M9 1 1 9" /></Ic></XIcon>
      </XRight>
    </XTitle>
    <XRibbon>
      {ribbon.map((r, i) => <XTab key={r} $mr={i === 0 ? 3.500 : 0}>{r}</XTab>)}
      <XShare><Share size={9} strokeWidth={1.500} />Share<Caret $r={2} $c="#e9f2ec" $ml={2} /></XShare>
    </XRibbon>
    <XCols>
      <XCorner><svg width="9" height="9" viewBox="0 0 9 9"><path d="M9 0v9H0z" fill="#b5b5b5" /></svg></XCorner>
      {colNames.map(c => <XCol key={c} $on={c === 'S'}>{c}</XCol>)}
      <XColEnd><svg width="8" height="6" viewBox="0 0 8 6"><path d="M4 0l4 6H0z" fill="#666" /></svg></XColEnd>
    </XCols>
    <XBody>
      <XRows>{rowH.map((h, i) => <XRow key={i} $h={h}>{i + 1}</XRow>)}</XRows>
      <XSheet>
        <XHeading>Break Even Analysis</XHeading>
        <XBanner $h={18} $fs={11.600}>Break Even Chart</XBanner>
        <XChartFrame><Chart /></XChartFrame>
        <XBanner $h={21.500} $fs={13.800}>Break Even Calculation</XBanner>
        <XFiscal>
          <XFiscalLabel>Fiscal Year</XFiscalLabel>
          {years.map(d => <XYear key={d.y}>{d.y}</XYear>)}
        </XFiscal>
      </XSheet>
      <XVScroll><XVBar /></XVScroll>
    </XBody>
  </Excel>
);

const menus = ['File', 'Edit', 'View', 'E-Sign', 'Window', 'Help'];
const editItems = [
  { w: 88, t: 'Edit', i: <EdPage /> },
  { w: 122, t: 'Add Text', i: <TextT /> },
  { w: 143, t: 'Add Image', i: <AddImg /> },
  { w: 98, t: 'Link', i: <LinkI />, c: 1 },
  { w: 143, t: 'Crop Pages', i: <Crop /> },
  { w: 198, t: 'Header & Footer', i: <HdrFtr />, c: 1 },
  { w: 155, t: 'Watermark', i: <Wmark />, c: 1 },
  { w: 110, t: 'More', i: <More />, c: 1 },
];

export default function App() {
  return (
    <Shell>
      <Global />
      <TitleBar>
        <AcrobatFile />
        <TitleText>Physiotherapy Finance Model Walkthrough.pdf - Adobe Acrobat Pro DC (64-bit)</TitleText>
        <WinControls>
          <WinBtn><WinMin /></WinBtn>
          <WinBtn><WinRestore /></WinBtn>
          <WinBtn><WinClose /></WinBtn>
        </WinControls>
      </TitleBar>
      <MenuBar>{menus.map(m => <span key={m}>{m}</span>)}</MenuBar>
      <TabBar>
        <NavTabs><NavTab>Home</NavTab><NavTab>Tools</NavTab></NavTabs>
        <DocTab>Physiotherapy Fina...<TabClose>×</TabClose></DocTab>
        <TabRight>
          <TabSlot><Thumb /></TabSlot>
          <TabSlot><Help /></TabSlot>
          <TabSlot><FaBell size={24} color="#7c7c7c" /></TabSlot>
          <SignIn>Sign In</SignIn>
        </TabRight>
      </TabBar>
      <Toolbar>
        <Slot $w={55.500} $ml={2}><Save /></Slot>
        <Slot $w={55.500}><Star /></Slot>
        <Slot $w={55.500}><Upload /></Slot>
        <Slot $w={55.500}><Print /></Slot>
        <Slot $w={55.500}><Find /></Slot>
        <Slot $ml={170}><CircleUp /></Slot>
        <Slot><CircleDown /></Slot>
        <Field $w={36} $ml={12.500}>5</Field>
        <PlainLabel $ml={9} $w={26}>/ 7</PlainLabel>
        <ToolSep $ml={19} />
        <Slot $ml={13}><Cursor /></Slot>
        <Slot><Hand size={30} color={G} strokeWidth={1.700} /></Slot>
        <Slot><Minus /></Slot>
        <Slot><Plus /></Slot>
        <Field $w={86} $ml={13.500} $j="flex-start" $pl={9}>127%<FieldCaret /></Field>
        <Slot $w={36} $ml={21}><Fit /></Slot>
        <Caret $c={BLUE} $ml={1} />
        <Slot $ml={16.500}><ReadMode /></Slot>
        <ToolSep $ml={13.500} />
        <Slot $ml={11}><Note /></Slot>
        <Slot><Marker /></Slot>
        <Slot $w={54}><Nib /></Slot>
        <Slot $w={55}><Bin /></Slot>
        <Slot><Rotate /></Slot>
        <ToolRight>
          <Slot><LinkCloud /></Slot>
          <Slot><Mail /></Slot>
          <Slot><UserAdd /></Slot>
        </ToolRight>
      </Toolbar>
      <EditBar>
        <Strip />
        <EditTitle>Edit PDF</EditTitle>
        {editItems.map(e => (
          <EditItem key={e.t} $w={e.w}>{e.i}<span>{e.t}</span>{e.c && <Caret $ml={-2} />}</EditItem>
        ))}
        <CloseBtn>Close</CloseBtn>
      </EditBar>
      <Main>
        <LeftRail><Pages /><Bookmark /><Clip /></LeftRail>
        <Gutter><Tri $dir="l" /></Gutter>
        <Viewport>
          <PageText>
            <Line>Income statements are also broken down into 5 year key metrics, you can also view this same information</Line>
            <Line>in charts.</Line>
            <Line />
            <Line>You will also notice in all three statements that tax rates have been set with a formula</Line>
            <Line><Formula>{'="Cell"*0.20'}</Formula>{'    = to 20 Percent'}</Line>
            <Line>You can of course edit these cells (and any other cell you wish to edit.</Line>
            <Line>Here some example tax rates you may wish to use</Line>
            <Line><Formula>{'="Cell"*0.10'}</Formula>{'     = 10 Percent'}</Line>
            <Line><Formula>{'="Cell"*0.05'}</Formula>{'     = 5 Percent'}</Line>
            <Line /><Line /><Line />
            <Line>Break Even Analysis Tab with Key Performance Metrics</Line>
          </PageText>
          <ExcelPic />
        </Viewport>
        <ScrollTrack><ThumbTop /><ThumbMid /></ScrollTrack>
        <Gutter><Tri $dir="r" /></Gutter>
        <Panel>
          <Heading>FORMAT</Heading>
          <Select $w={225} $h={28} $mt={20}><SelectCaret $t={8} /></Select>
          <Row $h={36} $mt={13}>
            <Select $w={82} $h={36}><SelectCaret $t={16} /></Select>
            <HelpBox><Help c="#666" s={24} /></HelpBox>
          </Row>
          <Row $h={36} $mt={10} $ml={-9}>
            <Cell $w={48.500}><SerifT $b>T</SerifT></Cell>
            <Cell $w={48.500}><SerifT $i>T</SerifT></Cell>
            <Cell $w={48.500}><SerifT $u>T</SerifT></Cell>
            <Cell $w={48.500} $pr={6}><SerifT>T<SupSub>1</SupSub></SerifT></Cell>
            <Cell $w={48.500} $pr={6}><SerifT>T<SupSub $sub>1</SupSub></SerifT></Cell>
          </Row>
          <Row $h={36} $mt={9}>
            <ListBox><ListMain><ListBullets /></ListMain><ListSide><Caret /></ListSide></ListBox>
            <ListBox><ListMain><Nums>1<br />2<br />3</Nums><ListLines /></ListMain><ListSide><Caret /></ListSide></ListBox>
          </Row>
          <Row $h={28} $mt={14} $ml={-9}>
            {['l', 'c', 'r', 'j'].map(k => <Cell key={k} $w={48.500}><AlignI kind={k} /></Cell>)}
          </Row>
          <Row $h={36} $mt={13}>
            <SpaceCell><LineSpacing /></SpaceCell>
            <Select $w={67} $h={36}><SelectCaret $t={16} /></Select>
            <SpaceCell $ml={13}><LineSpacing many /></SpaceCell>
            <Select $w={67} $h={36}><SelectCaret $t={16} /></Select>
          </Row>
          <Row $h={36} $mt={13}>
            <SpaceCell><Stack><TT>T</TT><HArrow /></Stack></SpaceCell>
            <Select $w={67} $h={36}><SelectCaret $t={16} /></Select>
            <SpaceCell $ml={13}><Stack><AV>AV</AV><HArrow /></Stack></SpaceCell>
            <Select $w={67} $h={36}><SelectCaret $t={16} /></Select>
          </Row>
          <Sep $mt={19} />
          <Heading $mt={18}>OBJECTS</Heading>
          <Row $h={36} $mt={9} $ml={-8}>
            <ObjCell>{Obj.flipH}</ObjCell><ObjCell>{Obj.flipV}</ObjCell><ObjCell>{Obj.crop}</ObjCell>
            <ObjCell $menu>{Obj.align}<Caret /></ObjCell>
          </Row>
          <Row $h={36} $mt={7} $ml={-8}>
            <ObjCell>{Obj.undo}</ObjCell><ObjCell>{Obj.redo}</ObjCell><ObjCell>{Obj.replace}</ObjCell>
            <ObjCell $menu>{Obj.copy}<Caret /></ObjCell>
          </Row>
          <Row $h={32} $mt={7} $ml={2}>
            <FaPen size={22} color={D} />
            <Muted $ml={11}>Edit Using...</Muted>
            <GrowCaret $c={D} />
          </Row>
          <Sep $mt={17} />
          <Heading $mt={18}>SCANNED DOCUMENTS</Heading>
          <Row $h={28} $mt={11} $ml={2}>
            <FaCog size={25} color="#b5b5b5" />
            <Muted $ml={8} $c="#d8d8d8">Settings</Muted>
          </Row>
          <Row $h={28} $mt={10}>
            <Check $dim /><Muted $ml={12}>Recognize text</Muted>
          </Row>
          <Sep $mt={15} />
          <Row $h={28} $mt={16}>
            <Check $on><FaCheck size={14} /></Check><Muted $ml={12} $c="#d8d8d8">Show bounding boxes</Muted>
          </Row>
          <Row $h={28} $mt={7}>
            <Check /><Muted $ml={12} $c="#d8d8d8">Restrict editing</Muted>
          </Row>
        </Panel>
        <Rail>{railIcons.map((ic, i) => <RailSlot key={i} $on={i === 2}>{ic}</RailSlot>)}</Rail>
      </Main>
    </Shell>
  );
}
